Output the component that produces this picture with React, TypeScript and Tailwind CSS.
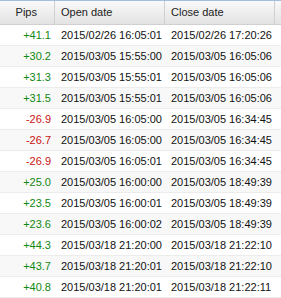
import React from "react";

const rows: [string, string, string][] = [
  ["+41.1", "2015/02/26 16:05:01", "2015/02/26 17:20:26"],
  ["+30.2", "2015/03/05 15:55:00", "2015/03/05 16:05:06"],
  ["+31.3", "2015/03/05 15:55:01", "2015/03/05 16:05:06"],
  ["+31.5", "2015/03/05 15:55:01", "2015/03/05 16:05:06"],
  ["-26.9", "2015/03/05 16:05:00", "2015/03/05 16:34:45"],
  ["-26.7", "2015/03/05 16:05:00", "2015/03/05 16:34:45"],
  ["-26.9", "2015/03/05 16:05:01", "2015/03/05 16:34:45"],
  ["+25.0", "2015/03/05 16:00:00", "2015/03/05 18:49:39"],
  ["+23.5", "2015/03/05 16:00:01", "2015/03/05 18:49:39"],
  ["+23.6", "2015/03/05 16:00:02", "2015/03/05 18:49:39"],
  ["+44.3", "2015/03/18 21:20:00", "2015/03/18 21:22:10"],
  ["+43.7", "2015/03/18 21:20:01", "2015/03/18 21:22:10"],
  ["+40.8", "2015/03/18 21:20:01", "2015/03/18 21:22:11"],
];

export default function App() {
  return (
    <div
      className="w-[281px] h-[298px] overflow-hidden bg-white text-[11px] text-[#111]"
      style={{ fontFamily: '"Liberation Sans", Arial, sans-serif' }}
    >
      <div className="flex h-[25px] border-t border-t-[#a3bfe0] border-b border-b-[#d0d0d0] bg-gradient-to-b from-[#f9f9f9] to-[#e3e3e3] text-[#222]">
        <div className="w-[55px] shrink-0 flex items-center justify-end pr-[17px] border-r border-r-[#d0d0d0]">
          Pips
        </div>
        <div className="w-[110px] shrink-0 flex items-center pl-[6px] border-r border-r-[#d0d0d0]">
          Open date
        </div>
        <div className="w-[110px] shrink-0 flex items-center pl-[6px] border-r border-r-[#d0d0d0]">
          Close date
        </div>
        <div className="flex-1" />
      </div>
      {rows.map((r, i) => (
        <div
          key={i}
          className={`flex h-[21px] border-b border-b-[#ececec] ${i % 2 === 1 ? "bg-[#f8f8f8]" : "bg-white"}`}
        >
          <div
            className={`w-[55px] shrink-0 flex items-center justify-end pr-[4px] ${r[0].startsWith("-") ? "text-[#cc1111]" : "text-[#118811]"}`}
          >
            {r[0]}
          </div>
          <div className="w-[110px] shrink-0 flex items-center pl-[6px]">{r[1]}</div>
          <div className="w-[110px] shrink-0 flex items-center pl-[6px]">{r[2]}</div>
          <div className="flex-1" />
        </div>
      ))}
    </div>
  );
}
